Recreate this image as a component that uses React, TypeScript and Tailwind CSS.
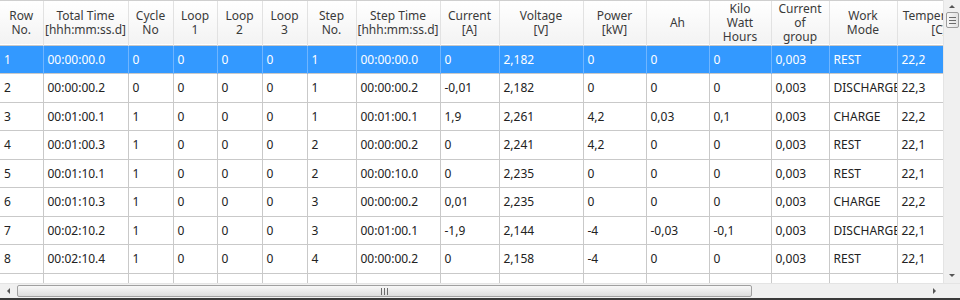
import React from "react";

const cols = [
  { w: 43, h: ["Row", "No."] },
  { w: 85, h: ["Total Time", "[hhh:mm:ss.d]"] },
  { w: 45, h: ["Cycle", "No"] },
  { w: 44, h: ["Loop", "1"] },
  { w: 45, h: ["Loop", "2"] },
  { w: 45, h: ["Loop", "3"] },
  { w: 49, h: ["Step", "No."] },
  { w: 84, h: ["Step Time", "[hhh:mm:ss.d]"] },
  { w: 59, h: ["Current", "[A]"] },
  { w: 84, h: ["Voltage", "[V]"] },
  { w: 63, h: ["Power", "[kW]"] },
  { w: 63, h: ["Ah"] },
  { w: 62, h: ["Kilo", "Watt", "Hours"] },
  { w: 58, h: ["Current", "of", "group"] },
  { w: 68, h: ["Work", "Mode"] },
  { w: 84, h: ["Temperature", "[C]"] },
];

const rows = [
  ["1", "00:00:00.0", "0", "0", "0", "0", "1", "00:00:00.0", "0", "2,182", "0", "0", "0", "0,003", "REST", "22,2"],
  ["2", "00:00:00.2", "0", "0", "0", "0", "1", "00:00:00.2", "-0,01", "2,182", "0", "0", "0", "0,003", "DISCHARGE", "22,3"],
  ["3", "00:01:00.1", "1", "0", "0", "0", "1", "00:01:00.1", "1,9", "2,261", "4,2", "0,03", "0,1", "0,003", "CHARGE", "22,2"],
  ["4", "00:01:00.3", "1", "0", "0", "0", "2", "00:00:00.2", "0", "2,241", "4,2", "0", "0", "0,003", "REST", "22,1"],
  ["5", "00:01:10.1", "1", "0", "0", "0", "2", "00:00:10.0", "0", "2,235", "0", "0", "0", "0,003", "REST", "22,1"],
  ["6", "00:01:10.3", "1", "0", "0", "0", "3", "00:00:00.2", "0,01", "2,235", "0", "0", "0", "0,003", "CHARGE", "22,2"],
  ["7", "00:02:10.2", "1", "0", "0", "0", "3", "00:01:00.1", "-1,9", "2,144", "-4", "-0,03", "-0,1", "0,003", "DISCHARGE", "22,1"],
  ["8", "00:02:10.4", "1", "0", "0", "0", "4", "00:00:00.2", "0", "2,158", "-4", "0", "0", "0,003", "REST", "22,1"],
  ["", "", "", "", "", "", "", "", "", "", "", "", "", "", "", ""],
];

function Grip({ vertical }: { vertical?: boolean }) {
  return vertical ? (
    <div className="flex flex-col gap-[2px]">
      <div className="w-[7px] h-px bg-[#6b6b6b]" />
      <div className="w-[7px] h-px bg-[#6b6b6b]" />
      <div className="w-[7px] h-px bg-[#6b6b6b]" />
    </div>
  ) : (
    <div className="flex gap-[2px]">
      <div className="h-[7px] w-px bg-[#6b6b6b]" />
      <div className="h-[7px] w-px bg-[#6b6b6b]" />
      <div className="h-[7px] w-px bg-[#6b6b6b]" />
    </div>
  );
}

export default function App() {
  return (
    <div
      className="w-[960px] h-[300px] bg-white flex flex-col overflow-hidden border-b-2 border-[#3a3a3a]"
      style={{ fontFamily: '"Noto Sans", sans-serif' }}
    >
      <div className="flex flex-1 min-h-0">
        <div className="w-[943px] overflow-hidden border-t border-[#cfcfcf]">
          <table className="table-fixed border-collapse text-[12px] leading-[14px] w-[981px]">
            <colgroup>
              {cols.map((c, i) => (
                <col key={i} style={{ width: c.w }} />
              ))}
            </colgroup>
            <thead>
              <tr className="h-[44px] bg-gradient-to-b from-[#ffffff] to-[#f3f3f3] border-b border-[#c8c8c8]">
                {cols.map((c, i) => (
                  <th key={i} className="font-normal text-[#3a3a3a] text-center border-r border-[#e2e2e2] p-0 pt-[1px] whitespace-nowrap overflow-hidden">
                    {c.h.map((l, j) => (
                      <div key={j}>{l}</div>
                    ))}
                  </th>
                ))}
              </tr>
            </thead>
            <tbody>
              {rows.map((r, i) => (
                <tr key={i} className={i === 0 ? "h-[28.5px] bg-[#3399ff] text-white" : "h-[28.5px] text-[#222] border-t border-[#c9c9c9]"}>
                  {r.map((v, j) => (
                    <td key={j} className={i === 0 ? "px-[4px] py-0 pt-[1px] border-r border-[#6fb5ff] whitespace-nowrap overflow-hidden" : "px-[4px] py-0 pt-[1px] border-r border-[#c9c9c9] whitespace-nowrap overflow-hidden"}>
                      {v}
                    </td>
                  ))}
                </tr>
              ))}
            </tbody>
          </table>
        </div>
        <div className="w-[17px] bg-[#f0f0f0] border-l border-[#e4e4e4] flex flex-col items-center">
          <div className="h-[12px] flex items-center justify-center">
            <div className="w-0 h-0 border-x-[3px] border-x-transparent border-b-[3px] border-b-[#555]" />
          </div>
          <div className="w-[13px] h-[16px] bg-gradient-to-r from-[#f7f7f7] to-[#e2e2e2] border border-[#9c9c9c] rounded-[2px] flex items-center justify-center">
            <Grip vertical />
          </div>
          <div className="flex-1" />
          <div className="h-[16px] flex items-center justify-center">
            <div className="w-0 h-0 border-x-[3px] border-x-transparent border-t-[3px] border-t-[#555]" />
          </div>
        </div>
      </div>
      <div className="h-[15px] flex bg-[#f0f0f0] border-t border-[#e4e4e4]">
        <div className="w-[17px] flex items-center justify-center">
          <div className="w-0 h-0 border-y-[3px] border-y-transparent border-r-[3px] border-r-[#555]" />
        </div>
        <div className="w-[735px] my-[1px] bg-gradient-to-b from-[#f8f8f8] to-[#dcdcdc] border border-[#a0a0a0] rounded-[2px] flex items-center justify-center">
          <Grip />
        </div>
        <div className="flex-1" />
        <div className="w-[17px] flex items-center justify-center">
          <div className="w-0 h-0 border-y-[3px] border-y-transparent border-l-[3px] border-l-[#555]" />
        </div>
        <div className="w-[17px] bg-[#f0f0f0]" />
      </div>
    </div>
  );
}
